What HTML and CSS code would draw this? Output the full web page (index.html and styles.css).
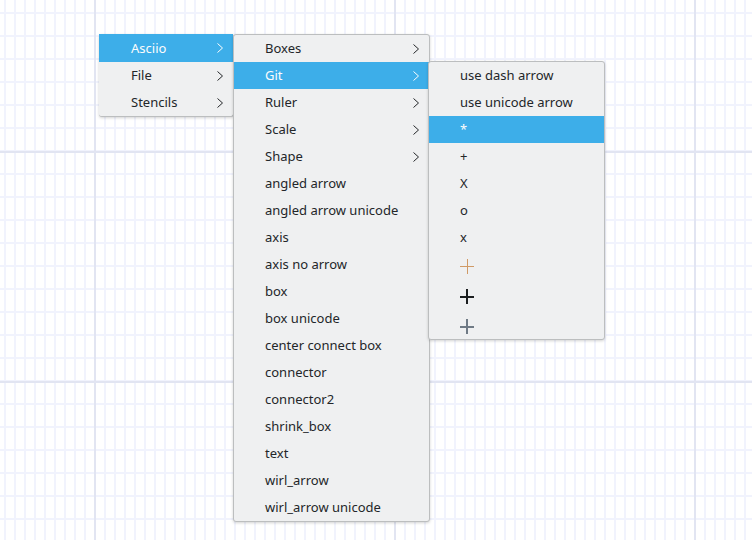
FILE: index.html
```html
<!DOCTYPE html>
<html>
<head>
<meta charset="utf-8">
<link rel="stylesheet" href="styles.css">
</head>
<body>
<div class="canvas">
  <div class="menu m1">
    <div class="item active"><span class="label">Asciio</span><svg class="chev" viewBox="0 0 6 10"><polyline points="0.5,0.5 5.5,5 0.5,9.5"/></svg></div>
    <div class="item"><span class="label">File</span><svg class="chev" viewBox="0 0 6 10"><polyline points="0.5,0.5 5.5,5 0.5,9.5"/></svg></div>
    <div class="item"><span class="label">Stencils</span><svg class="chev" viewBox="0 0 6 10"><polyline points="0.5,0.5 5.5,5 0.5,9.5"/></svg></div>
  </div>
  <div class="menu m2">
    <div class="item"><span class="label">Boxes</span><svg class="chev" viewBox="0 0 6 10"><polyline points="0.5,0.5 5.5,5 0.5,9.5"/></svg></div>
    <div class="item active"><span class="label">Git</span><svg class="chev" viewBox="0 0 6 10"><polyline points="0.5,0.5 5.5,5 0.5,9.5"/></svg></div>
    <div class="item"><span class="label">Ruler</span><svg class="chev" viewBox="0 0 6 10"><polyline points="0.5,0.5 5.5,5 0.5,9.5"/></svg></div>
    <div class="item"><span class="label">Scale</span><svg class="chev" viewBox="0 0 6 10"><polyline points="0.5,0.5 5.5,5 0.5,9.5"/></svg></div>
    <div class="item"><span class="label">Shape</span><svg class="chev" viewBox="0 0 6 10"><polyline points="0.5,0.5 5.5,5 0.5,9.5"/></svg></div>
    <div class="item"><span class="label">angled arrow</span></div>
    <div class="item"><span class="label">angled arrow unicode</span></div>
    <div class="item"><span class="label">axis</span></div>
    <div class="item"><span class="label">axis no arrow</span></div>
    <div class="item"><span class="label">box</span></div>
    <div class="item"><span class="label">box unicode</span></div>
    <div class="item"><span class="label">center connect box</span></div>
    <div class="item"><span class="label">connector</span></div>
    <div class="item"><span class="label">connector2</span></div>
    <div class="item"><span class="label">shrink_box</span></div>
    <div class="item"><span class="label">text</span></div>
    <div class="item"><span class="label">wirl_arrow</span></div>
    <div class="item"><span class="label">wirl_arrow unicode</span></div>
  </div>
  <div class="menu m3">
    <div class="item"><span class="label">use dash arrow</span></div>
    <div class="item"><span class="label">use unicode arrow</span></div>
    <div class="item active"><span class="label">*</span></div>
    <div class="item"><span class="label">+</span></div>
    <div class="item"><span class="label">X</span></div>
    <div class="item"><span class="label">o</span></div>
    <div class="item"><span class="label">x</span></div>
    <div class="item icon-row"><svg class="plus" viewBox="0 0 14 15"><path class="thin" d="M0 7.5H14M7.5 0V15"/></svg></div>
    <div class="item icon-row"><svg class="plus" viewBox="0 0 14 15"><path class="thick-dark" d="M0 8H14M7 0V15"/></svg></div>
    <div class="item icon-row last"><svg class="plus" viewBox="0 0 14 15"><path class="thick-gray" d="M0 8H14M7 0V15"/></svg></div>
  </div>
</div>
</body>
</html>
```

FILE: styles.css
```css
html, body {
  margin: 0;
  padding: 0;
}
body {
  width: 752px;
  height: 540px;
  overflow: hidden;
  background-color: #ffffff;
  background-image:
    linear-gradient(to right, #e2e5f2 2px, transparent 2px),
    linear-gradient(to bottom, #e2e5f2 2px, transparent 2px),
    linear-gradient(to right, #f1f3fd 2px, transparent 2px),
    linear-gradient(to bottom, #f1f3fd 2px, transparent 2px);
  background-size: 300px 100%, 100% 230px, 10px 100%, 100% 23px;
  background-position: 94px 0, 0 151px, 4px 0, 0 12px;
  font-family: "Noto Sans", "Open Sans", sans-serif;
  font-size: 13px;
  color: #232629;
}
.canvas {
  position: relative;
  width: 752px;
  height: 540px;
}
.menu {
  position: absolute;
  background: #eff0f1;
  border: 1px solid #bcbebf;
  border-radius: 3px;
  box-shadow: 0 1px 3px rgba(0, 0, 0, 0.18);
  box-sizing: border-box;
}
.m1 {
  left: 99px;
  top: 34px;
  width: 135px;
  border-top: 0;
  border-left: 0;
}
.m1 .item:first-child {
  height: 28px;
}
.m2 {
  left: 233px;
  top: 34px;
  width: 197px;
  z-index: 1;
}
.m3 {
  left: 428px;
  top: 61px;
  width: 177px;
  z-index: 2;
}
.item {
  height: 27px;
  display: flex;
  align-items: center;
  justify-content: space-between;
  padding-left: 31px;
  padding-right: 10px;
  white-space: nowrap;
}
.m1 .item {
  padding-left: 32px;
}
.item.active {
  background: #3daee9;
  color: #fcfcfc;
}
.label {
  line-height: 27px;
}
.chev {
  width: 6px;
  height: 10px;
  fill: none;
  stroke: #232629;
  stroke-width: 1;
}
.active .chev {
  stroke: #fcfcfc;
}
.icon-row {
  height: 30px;
  justify-content: flex-start;
}
.icon-row.last {
  height: 28px;
  align-items: flex-start;
  padding-top: 8px;
  box-sizing: border-box;
}
.plus {
  width: 14px;
  height: 15px;
  fill: none;
}
.thin {
  stroke: #d09a66;
  stroke-width: 1;
}
.thick-dark {
  stroke: #1b1e20;
  stroke-width: 2;
}
.thick-gray {
  stroke: #6f7a85;
  stroke-width: 2;
}
```
